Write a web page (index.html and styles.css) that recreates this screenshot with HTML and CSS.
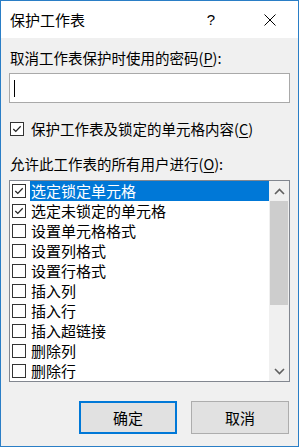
FILE: index.html
```html
<!DOCTYPE html>
<html lang="zh">
<head>
  <meta charset="UTF-8" />
  <meta name="viewport" content="width=device-width, initial-scale=1.0" />
  <title>保护工作表</title>
  <link rel="stylesheet" href="styles.css">
</head>
<body>
  <div class="dialog">
    <div class="titlebar">
      <span class="title">保护工作表</span>
      <span class="help">?</span>
      <svg class="close" width="12" height="12" viewBox="0 0 12 12">
        <path d="M0.5 0.5 L11.5 11.5 M11.5 0.5 L0.5 11.5" />
      </svg>
    </div>

    <div class="content">
      <div class="label first">取消工作表保护时使用的密码(<u>P</u>):</div>
      <div class="password"><span class="caret"></span></div>

      <div class="check-row">
        <span class="box"><svg viewBox="0 0 13 13"><path d="M2.5 6.5 L5.2 9.2 L10.5 3.5" /></svg></span>
        <span>保护工作表及锁定的单元格内容(<u>C</u>)</span>
      </div>

      <div class="label">允许此工作表的所有用户进行(<u>O</u>):</div>

      <div class="listbox">
        <ul class="items">
          <li class="selected"><span class="box"><svg viewBox="0 0 13 13"><path d="M2.5 6.5 L5.2 9.2 L10.5 3.5" /></svg></span><span class="text">选定锁定单元格</span></li>
          <li><span class="box"><svg viewBox="0 0 13 13"><path d="M2.5 6.5 L5.2 9.2 L10.5 3.5" /></svg></span><span class="text">选定未锁定的单元格</span></li>
          <li><span class="box"></span><span class="text">设置单元格格式</span></li>
          <li><span class="box"></span><span class="text">设置列格式</span></li>
          <li><span class="box"></span><span class="text">设置行格式</span></li>
          <li><span class="box"></span><span class="text">插入列</span></li>
          <li><span class="box"></span><span class="text">插入行</span></li>
          <li><span class="box"></span><span class="text">插入超链接</span></li>
          <li><span class="box"></span><span class="text">删除列</span></li>
          <li><span class="box"></span><span class="text">删除行</span></li>
        </ul>
        <div class="scrollbar">
          <div class="arrow">
            <svg width="11" height="7" viewBox="0 0 11 7"><path d="M1 6 L5.5 1.5 L10 6" /></svg>
          </div>
          <div class="thumb"></div>
          <div class="track"></div>
          <div class="arrow">
            <svg width="11" height="7" viewBox="0 0 11 7"><path d="M1 1 L5.5 5.5 L10 1" /></svg>
          </div>
        </div>
      </div>

      <div class="buttons">
        <button class="btn default">确定</button>
        <button class="btn">取消</button>
      </div>
    </div>
  </div>
</body>
</html>
```

FILE: styles.css
```css
body {
  margin: 0;
  font-family: "Noto Sans CJK SC", "Noto Sans", sans-serif;
  color: #000;
}
.dialog {
  width: 299px;
  height: 447px;
  box-sizing: border-box;
  border: 1px solid #2a7ec6;
  background: #f0f0f0;
}
.titlebar {
  height: 37px;
  background: #fff;
  display: flex;
  align-items: center;
  padding-left: 9px;
}
.title {
  font-size: 15px;
  line-height: 20px;
  flex: 1;
}
.help {
  font-family: "Liberation Sans", Arial, sans-serif;
  font-size: 15px;
  line-height: 20px;
  margin-right: 49px;
}
.close {
  margin-right: 22px;
}
.close path {
  stroke: #000;
  stroke-width: 1;
  fill: none;
}
.content {
  padding: 0 8px;
}
.label {
  font-size: 14.5px;
  line-height: 20px;
  margin-top: 15px;
  padding-left: 1px;
}
.label.first {
  margin-top: 10px;
}
u {
  text-decoration-thickness: 1px;
  text-underline-offset: 2px;
}
.password {
  margin-top: 5px;
  height: 30px;
  box-sizing: border-box;
  border: 1px solid #a9a9a9;
  background: #fff;
  display: flex;
  align-items: center;
  padding-left: 4px;
}
.caret {
  width: 1px;
  height: 17px;
  background: #000;
}
.box {
  width: 14px;
  height: 14px;
  box-sizing: border-box;
  border: 1px solid #333;
  background: #fff;
  flex: none;
  display: flex;
}
.box svg {
  width: 12px;
  height: 12px;
}
.box path {
  fill: none;
  stroke: #222;
  stroke-width: 1.3;
}
.check-row {
  margin-top: 16px;
  display: flex;
  align-items: center;
  gap: 7px;
  padding-left: 1px;
  font-size: 14.5px;
  line-height: 20px;
}
.listbox {
  margin-top: 6px;
  height: 202px;
  box-sizing: border-box;
  border: 1px solid #828790;
  background: #fff;
  display: flex;
}
.items {
  list-style: none;
  margin: 0;
  padding: 0;
  flex: 1;
}
.items li {
  height: 20px;
  display: flex;
  align-items: center;
  padding-left: 2px;
  font-size: 15px;
}
.items .box {
  margin-right: 4px;
}
.items .text {
  flex: 1;
  line-height: 20px;
  padding-left: 1px;
}
.items li.selected .text {
  background: #0078d7;
  color: #fff;
}
.scrollbar {
  width: 20px;
  background: #f0f0f0;
  display: flex;
  flex-direction: column;
}
.arrow {
  height: 20px;
  display: flex;
  align-items: center;
  justify-content: center;
}
.arrow path {
  fill: none;
  stroke: #606060;
  stroke-width: 1.6;
}
.thumb {
  height: 104px;
  margin: 0 1px;
  background: #cdcdcd;
}
.track {
  flex: 1;
}
.buttons {
  margin-top: 19px;
  display: flex;
  justify-content: flex-end;
  gap: 14px;
  padding-right: 1px;
}
.btn {
  width: 98px;
  height: 33px;
  box-sizing: border-box;
  border: 1px solid #adadad;
  background: #e1e1e1;
  font-family: "Noto Sans CJK SC", sans-serif;
  font-size: 15px;
  color: #000;
  padding: 0;
}
.btn.default {
  border: 2px solid #0078d7;
}
```
